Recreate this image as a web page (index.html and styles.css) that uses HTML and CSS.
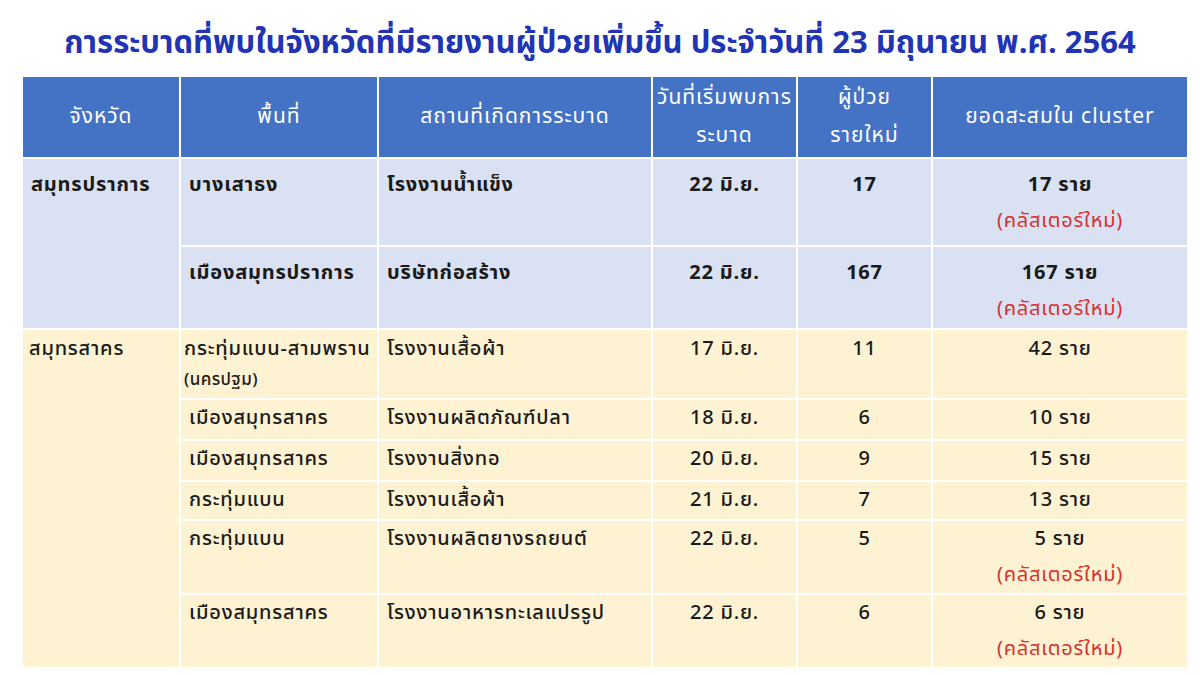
FILE: index.html
```html
<!DOCTYPE html>
<html lang="th">
<head>
<meta charset="utf-8">
<link rel="stylesheet" href="styles.css">
</head>
<body>
<h1 class="title">การระบาดที่พบในจังหวัดที่มีรายงานผู้ป่วยเพิ่มขึ้น ประจำวันที่ 23 มิถุนายน พ.ศ. 2564</h1>
<table class="grid">
  <colgroup>
    <col class="c1"><col class="c2"><col class="c3"><col class="c4"><col class="c5"><col class="c6">
  </colgroup>
  <thead>
    <tr class="head">
      <th>จังหวัด</th>
      <th>พื้นที่</th>
      <th>สถานที่เกิดการระบาด</th>
      <th>วันที่เริ่มพบการ<br>ระบาด</th>
      <th>ผู้ป่วย<br>รายใหม่</th>
      <th>ยอดสะสมใน cluster</th>
    </tr>
  </thead>
  <tbody class="blue">
    <tr class="r87">
      <td rowspan="2" class="prov">สมุทรปราการ</td>
      <td>บางเสาธง</td>
      <td>โรงงานน้ำแข็ง</td>
      <td class="ctr">22 มิ.ย.</td>
      <td class="ctr">17</td>
      <td class="ctr">17 ราย<br><span class="new">(คลัสเตอร์ใหม่)</span></td>
    </tr>
    <tr class="r82">
      <td>เมืองสมุทรปราการ</td>
      <td>บริษัทก่อสร้าง</td>
      <td class="ctr">22 มิ.ย.</td>
      <td class="ctr">167</td>
      <td class="ctr">167 ราย<br><span class="new">(คลัสเตอร์ใหม่)</span></td>
    </tr>
  </tbody>
  <tbody class="yellow">
    <tr class="r70">
      <td rowspan="6" class="prov">สมุทรสาคร</td>
      <td class="area2">กระทุ่มแบน-สามพราน<br><span class="sub">(นครปฐม)</span></td>
      <td>โรงงานเสื้อผ้า</td>
      <td class="ctr">17 มิ.ย.</td>
      <td class="ctr">11</td>
      <td class="ctr">42 ราย</td>
    </tr>
    <tr class="r40">
      <td>เมืองสมุทรสาคร</td>
      <td>โรงงานผลิตภัณฑ์ปลา</td>
      <td class="ctr">18 มิ.ย.</td>
      <td class="ctr">6</td>
      <td class="ctr">10 ราย</td>
    </tr>
    <tr class="r40">
      <td>เมืองสมุทรสาคร</td>
      <td>โรงงานสิ่งทอ</td>
      <td class="ctr">20 มิ.ย.</td>
      <td class="ctr">9</td>
      <td class="ctr">15 ราย</td>
    </tr>
    <tr class="r38">
      <td>กระทุ่มแบน</td>
      <td>โรงงานเสื้อผ้า</td>
      <td class="ctr">21 มิ.ย.</td>
      <td class="ctr">7</td>
      <td class="ctr">13 ราย</td>
    </tr>
    <tr class="r74">
      <td>กระทุ่มแบน</td>
      <td>โรงงานผลิตยางรถยนต์</td>
      <td class="ctr">22 มิ.ย.</td>
      <td class="ctr">5</td>
      <td class="ctr">5 ราย<br><span class="new">(คลัสเตอร์ใหม่)</span></td>
    </tr>
    <tr class="r73">
      <td>เมืองสมุทรสาคร</td>
      <td>โรงงานอาหารทะเลแปรรูป</td>
      <td class="ctr">22 มิ.ย.</td>
      <td class="ctr">6</td>
      <td class="ctr">6 ราย<br><span class="new">(คลัสเตอร์ใหม่)</span></td>
    </tr>
  </tbody>
</table>
</body>
</html>
```
FILE: styles.css
```css
html, body {
  margin: 0;
  padding: 0;
  background: #ffffff;
}
body {
  width: 1200px;
  height: 675px;
  overflow: hidden;
  font-family: "Noto Sans Thai", Tahoma, "DejaVu Sans", "Noto Sans", sans-serif;
  color: #1a1a1a;
}
.title {
  margin: 0;
  padding-top: 24px;
  height: 56px;
  box-sizing: border-box;
  text-align: center;
  font-size: 31px;
  line-height: 40px;
  font-weight: bold;
  color: #2034b4;
  white-space: nowrap;
}
.grid {
  margin-left: 21px;
  margin-top: 19px;
  width: 1166px;
  table-layout: fixed;
  border-collapse: collapse;
  font-size: 20px;
  letter-spacing: 0.8px;
}
.c1 { width: 158px; }
.c2 { width: 198px; }
.c3 { width: 274px; }
.c4 { width: 145px; }
.c5 { width: 135px; }
.c6 { width: 256px; }
.grid th, .grid td {
  border: 2px solid #ffffff;
  padding: 0 8px;
  vertical-align: top;
  text-align: left;
  white-space: nowrap;
}
.head th {
  height: 80px;
  background: #4472c4;
  color: #ffffff;
  font-weight: normal;
  font-size: 21px;
  letter-spacing: 1px;
  text-align: center;
  vertical-align: middle;
  line-height: 38px;
  padding: 0;
}
.blue td {
  background: #d9e1f2;
  font-weight: bold;
  line-height: 36px;
  padding-top: 8px;
}
.yellow td {
  background: #fdf2d2;
  font-weight: 500;
  line-height: 37px;
}
.ctr { text-align: center !important; }
.new { color: #d83030; font-weight: normal; }
.r87 td { height: 78px; }
.r82 td { height: 73px; }
.r70 td { height: 64px; padding-top: 4px; line-height: 30px; }
.r40 td { height: 39px; }
.r38 td { height: 37px; }
.r74 td { height: 72px; line-height: 36px; }
.r73 td { height: 71px; line-height: 36px; }
.sub { font-size: 17px; letter-spacing: 0.4px; }
.yellow .prov { padding-left: 6px; }
.area2 { padding-left: 3px !important; }
```
